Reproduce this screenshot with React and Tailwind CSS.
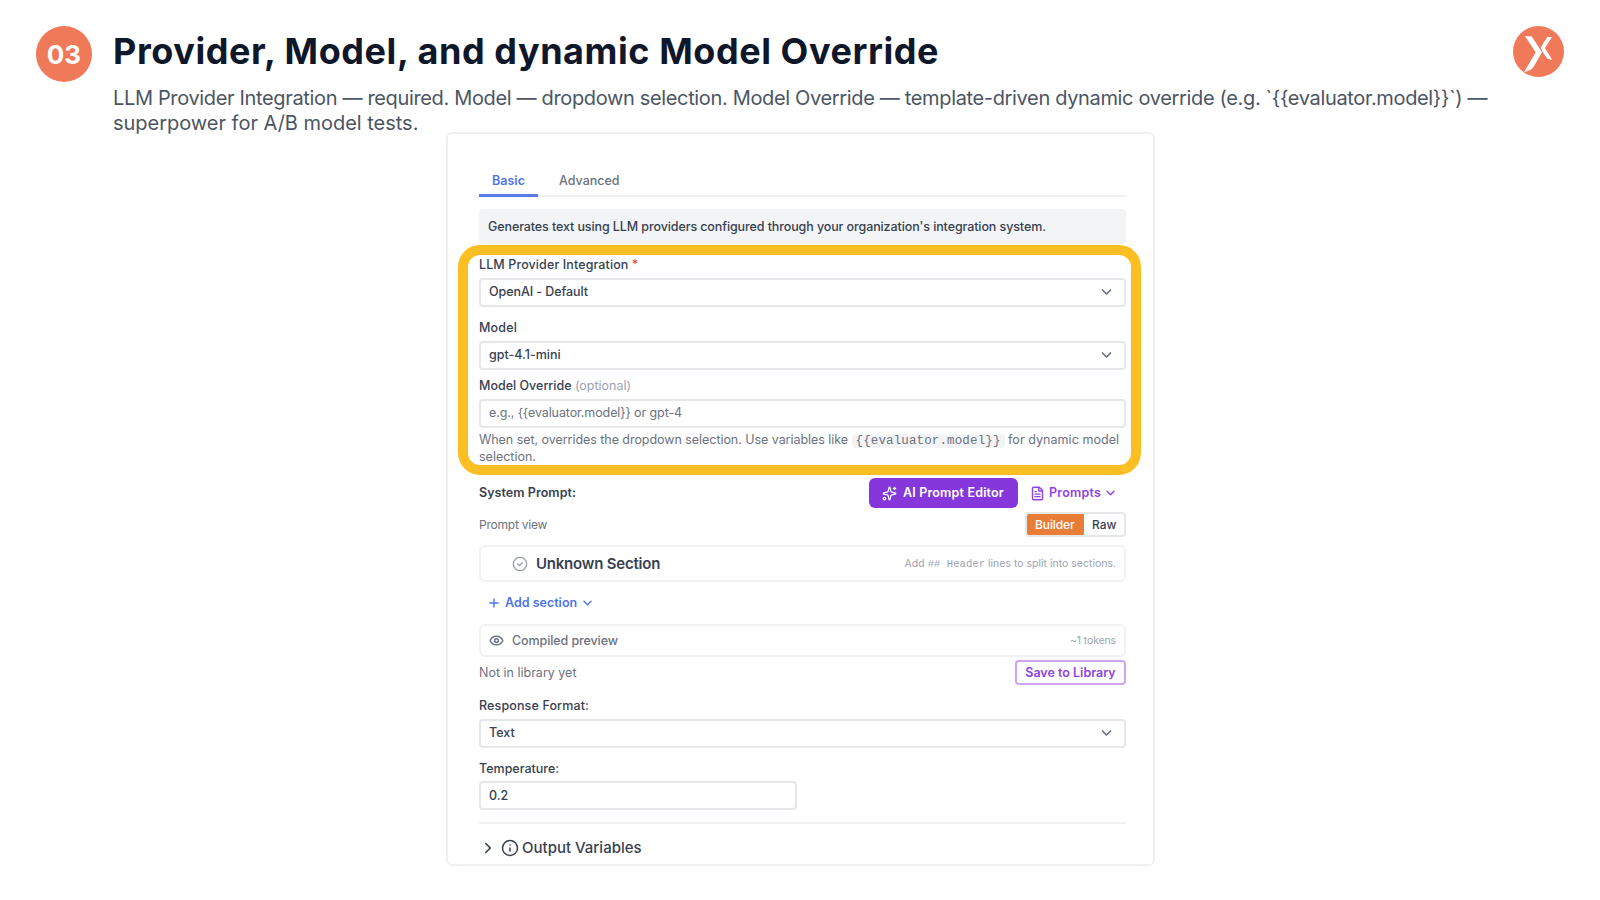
import { ChevronDown, ChevronRight, Eye, FileText, Info, Plus, Sparkles } from "lucide-react";

function Logo() {
  return (
    <svg className="h-[51px] w-[51px]" viewBox="0 0 153 153">
      <circle cx="76.5" cy="76.5" r="76.5" fill="#f0795a" />
      <path d="M36 31H56L87 79L61 124C55 132 46 135 33 139L68 79Z" fill="#fff" />
      <path d="M117 33H103C96 43 89 54 83 65C90 79 97 92 104 98L118 102L96 66Z" fill="#fff" />
    </svg>
  );
}

function CheckBadge() {
  return (
    <svg className="mr-2 h-4 w-4 text-[#9ca3af]" viewBox="0 0 24 24" fill="none" stroke="currentColor" strokeWidth="2" strokeLinecap="round" strokeLinejoin="round">
      <circle cx="12" cy="12" r="10" />
      <path d="m8.5 12 2.5 2.5 4.5-4.5" />
    </svg>
  );
}

function Label({ children }) {
  return <div className="mb-[3px] h-5 leading-5 font-medium">{children}</div>;
}

function SelectBox({ children }) {
  return (
    <div className="flex h-[29px] items-center justify-between rounded border-2 border-[#e5e7eb] bg-white pr-[9px] pl-2 font-medium">
      {children}
      <ChevronDown strokeWidth={2.6} className="-mt-px h-[16px] w-[17px] text-[#6b7280]" />
    </div>
  );
}

function Header() {
  return (
    <header className="flex h-[132px] items-start px-9 pt-[26px]">
      <div className="flex h-[56px] w-[56px] shrink-0 items-center justify-center rounded-full bg-[#f0795a] text-[26px] font-bold text-white">
        03
      </div>
      <div className="ml-[21px] w-[1400px] shrink-0">
        <h1 className="h-[52px] text-[36px] leading-[51px] font-bold tracking-[0.567px] text-[#0f172a]">
          Provider, Model, and dynamic Model Override
        </h1>
        <p className="mt-[8px] text-[20px] leading-[25px] whitespace-nowrap text-[#4b5563]">
          <span className="tracking-[-0.345px]">
            LLM Provider Integration — required. Model — dropdown selection. Model Override — template-driven dynamic
            override (e.g. `{"{{evaluator.model}}"}`) —
          </span>
          <br />
          <span className="tracking-[-0.02px]">superpower for A/B model tests.</span>
        </p>
      </div>
      <Logo />
    </header>
  );
}

export default function App() {
  return (
    <main className="h-[900px] w-[1600px] overflow-hidden bg-white font-['Inter',sans-serif]">
      <Header />

      <section className="ml-[446px] h-[734px] w-[709px] rounded-md border-2 border-[#eef0f3] pr-[27px] pl-[31px] text-[12.5px] text-[#374151]">
        <div className="flex h-[63px] border-b-2 border-[#eef0f3] font-medium">
          <div className="mt-[35px] h-[28px] w-[59px] border-b-[3px] border-[#5b7be8] text-center leading-[24px] font-semibold text-[#4f74e8]">
            Basic
          </div>
          <div className="mt-[35px] ml-[21px] leading-[24px] text-[#6b7280]">Advanced</div>
        </div>
        <div className="mt-3 flex h-[35px] items-center rounded bg-[#f3f4f6] pt-px pl-[9px] font-medium tracking-[-0.1px]">
          Generates text using LLM providers configured through your organization's integration system.
        </div>

        {/* highlighted model settings */}
        <div className="mt-px -mr-[15px] -ml-[21px] h-[230px] rounded-[22px] border-[10px] border-[#fbbf24] pr-[5px] pl-[11px]">
          <Label>
            <span className="tracking-[0.109px]">LLM Provider Integration</span>{" "}
            <span className="text-[#ef4444]">*</span>
          </Label>
          <SelectBox>
            <span className="tracking-[-0.062px]">OpenAI - Default</span>
          </SelectBox>
          <div className="mt-[11px]">
            <Label>
              <span className="tracking-[0.163px]">Model</span>
            </Label>
          </div>
          <SelectBox>gpt-4.1-mini</SelectBox>
          <div className="mt-[6px]">
            <Label>
              Model Override <span className="font-normal text-[#9ca3af]">(optional)</span>
            </Label>
          </div>
          <div className="flex h-[29px] items-center rounded border-2 border-[#e5e7eb] pl-2 tracking-[-0.104px] text-[#6b7280]">
            {"e.g., {{evaluator.model}} or gpt-4"}
          </div>
          <div className="mt-[3px] h-[17px] leading-[17px] whitespace-nowrap text-[#6b7280]">
            <span className="tracking-[-0.047px]">When set, overrides the dropdown selection. Use variables like</span>{" "}
            <code className="rounded bg-[#f3f4f6] px-1 font-['Liberation_Mono',monospace] tracking-[0.13px]">
              {"{{evaluator.model}}"}
            </code>{" "}
            <span className="tracking-[0.049px]">for dynamic model</span>
          </div>
          <div className="h-[17px] leading-[17px] text-[#6b7280]">selection.</div>
        </div>

        <div className="mt-[3px] flex h-[30px] items-center font-semibold">
          <span className="pt-px tracking-[0.052px]">System Prompt:</span>
          <div className="ml-auto flex h-[30px] w-[149px] items-center rounded-md bg-[#8637dc] pl-[13px] text-white">
            <Sparkles className="mr-[6px] h-[15px] w-[15px]" />
            <span className="pt-px tracking-[0.176px]">AI Prompt Editor</span>
          </div>
          <div className="flex w-[108px] items-center pl-3 text-[#9043e6]">
            <FileText strokeWidth={2.3} className="mr-1 h-[15px] w-[15px]" />
            <span className="pt-px tracking-[0.201px]">Prompts</span>
            <ChevronDown strokeWidth={2.4} className="ml-[2px] h-[14px] w-[15px]" />
          </div>
        </div>
        <div className="mt-1 flex h-[25px] items-center justify-between text-[#6b7280]">
          <span className="pt-px text-[12px] tracking-[-0.23px]">Prompt view</span>
          <div className="flex h-[25px] w-[101px] overflow-hidden rounded border-2 border-[#e5e7eb] text-[12px] leading-[21px] font-medium">
            <div className="-my-px -ml-px w-[58px] bg-[#e87d37] pl-[9px] leading-[23px] tracking-[-0.109px] text-white">
              Builder
            </div>
            <div className="pl-2 text-[#374151]">Raw</div>
          </div>
        </div>
        <div className="mt-2 flex h-[37px] items-center rounded-md border-2 border-[#f1f2f4] pr-2 pl-[31px]">
          <CheckBadge />
          <span className="pt-px text-[15px] font-semibold tracking-[-0.21px]">Unknown Section</span>
          <div className="ml-auto pt-px text-[10.5px] text-[#9ca3af]">
            Add <span className="font-['Liberation_Mono',monospace] tracking-[0.08px]">## Header</span> lines to split
            into sections.
          </div>
        </div>
        <div className="flex h-[42px] items-center pl-2 font-semibold text-[#4f74e8]">
          <Plus strokeWidth={2.4} className="mr-1 h-[14px] w-[14px]" />
          Add section
          <ChevronDown strokeWidth={2.4} className="ml-[3px] h-[14px] w-[15px]" />
        </div>
        <div className="flex h-[33px] items-center rounded-md border-2 border-[#f1f2f4] px-2 font-medium text-[#6b7280]">
          <Eye strokeWidth={2.4} className="mr-2 h-[15px] w-[15px]" />
          <span className="pt-px tracking-[-0.095px]">Compiled preview</span>
          <span className="ml-auto pt-px text-[10.5px] font-normal tracking-[-0.134px] text-[#9ca3af]">~1 tokens</span>
        </div>
        <div className="mt-[3px] flex h-[25px] items-center justify-between text-[#6b7280]">
          <span className="pt-px">Not in library yet</span>
          <div className="flex h-[25px] w-[111px] items-center justify-center rounded border-2 border-[#cfa4f5] pt-px font-semibold text-[#9043e6]">
            Save to Library
          </div>
        </div>
        <div className="mt-[11px]">
          <Label>
            <span className="tracking-[0.13px]">Response Format:</span>
          </Label>
        </div>
        <SelectBox>Text</SelectBox>
        <div className="mt-[11px] -mb-px">
          <Label>Temperature:</Label>
        </div>
        <div className="flex h-[29px] w-[318px] items-center rounded border-2 border-[#e5e7eb] pt-px pl-2 font-medium">
          0.2
        </div>
        <div className="mt-[12px] h-[2px] bg-[#eef0f3]" />
        <div className="mt-[7px] flex h-[34px] items-center text-[15px] font-medium">
          <ChevronRight strokeWidth={2.3} className="mr-[3px] ml-[-1px] h-[18px] w-5" />
          <Info className="mr-[3px] h-[18px] w-[18px]" />
          Output Variables
        </div>
      </section>
    </main>
  );
}
